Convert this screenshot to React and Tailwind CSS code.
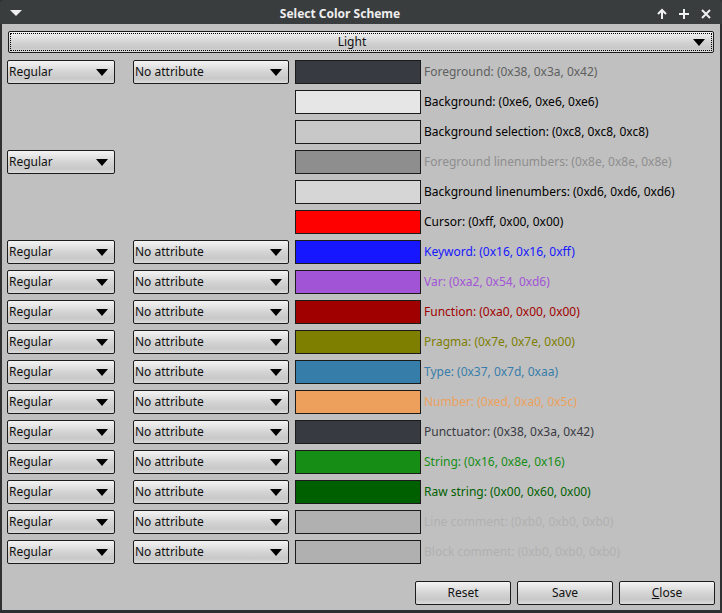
import React from "react";

const rows = [
  { style: true, attr: true, color: "#383a42", label: "Foreground: (0x38, 0x3a, 0x42)", tc: "#5f5f5f" },
  { style: false, attr: false, color: "#e6e6e6", label: "Background: (0xe6, 0xe6, 0xe6)", tc: "#000000" },
  { style: false, attr: false, color: "#c8c8c8", label: "Background selection: (0xc8, 0xc8, 0xc8)", tc: "#000000" },
  { style: true, attr: false, color: "#8e8e8e", label: "Foreground linenumbers: (0x8e, 0x8e, 0x8e)", tc: "#8e8e8e" },
  { style: false, attr: false, color: "#d6d6d6", label: "Background linenumbers: (0xd6, 0xd6, 0xd6)", tc: "#000000" },
  { style: false, attr: false, color: "#ff0000", label: "Cursor: (0xff, 0x00, 0x00)", tc: "#000000" },
  { style: true, attr: true, color: "#1616ff", label: "Keyword: (0x16, 0x16, 0xff)", tc: "#1616ff" },
  { style: true, attr: true, color: "#a254d6", label: "Var: (0xa2, 0x54, 0xd6)", tc: "#a254d6" },
  { style: true, attr: true, color: "#a00000", label: "Function: (0xa0, 0x00, 0x00)", tc: "#a00000" },
  { style: true, attr: true, color: "#7e7e00", label: "Pragma: (0x7e, 0x7e, 0x00)", tc: "#7e7e00" },
  { style: true, attr: true, color: "#377daa", label: "Type: (0x37, 0x7d, 0xaa)", tc: "#377daa" },
  { style: true, attr: true, color: "#eda05c", label: "Number: (0xed, 0xa0, 0x5c)", tc: "#eda05c" },
  { style: true, attr: true, color: "#383a42", label: "Punctuator: (0x38, 0x3a, 0x42)", tc: "#383a42" },
  { style: true, attr: true, color: "#168e16", label: "String: (0x16, 0x8e, 0x16)", tc: "#168e16" },
  { style: true, attr: true, color: "#006000", label: "Raw string: (0x00, 0x60, 0x00)", tc: "#006000" },
  { style: true, attr: true, color: "#b0b0b0", label: "Line comment: (0xb0, 0xb0, 0xb0)", tc: "#b0b0b0" },
  { style: true, attr: true, color: "#b0b0b0", label: "Block comment: (0xb0, 0xb0, 0xb0)", tc: "#b0b0b0" },
];

function Arrow() {
  return (
    <svg width="12" height="7" viewBox="0 0 12 7" className="shrink-0">
      <polygon points="0,0 12,0 6,7" fill="#000" />
    </svg>
  );
}

function Combo({ text, w }) {
  return (
    <div
      className={`${w} h-[24px] shrink-0 flex items-center justify-between pl-[1px] pr-[6px] border border-[#1c1c1c] rounded-[2px] bg-[linear-gradient(#f4f4f4,#d4d4d4_50%,#c8c8c8_80%,#dcdcdc)] text-[12px] text-[#111]`}
    >
      <span className="leading-none">{text}</span>
      <Arrow />
    </div>
  );
}

function Button({ children }) {
  return (
    <div className="w-[96px] h-[24px] flex items-center justify-center border border-[#1c1c1c] rounded-[2px] bg-[linear-gradient(#f4f4f4,#d4d4d4_50%,#c8c8c8_80%,#dcdcdc)] text-[12px] text-[#111]">
      {children}
    </div>
  );
}

export default function App() {
  return (
    <div className="w-[722px] h-[613px] flex flex-col bg-[#2e3031] font-['Noto_Sans',sans-serif] overflow-hidden">
      <div className="h-[24px] shrink-0 flex items-center px-[8px] pt-[3px] bg-[#3a3d3e] rounded-t-[4px]">
        <div className="w-[22px] flex items-center">
          <svg width="12" height="7" viewBox="0 0 12 7" className="ml-[2px]">
            <polygon points="0,0 12,0 6,6" fill="#f0f0f0" />
          </svg>
        </div>
        <div className="flex-1 text-center text-[12px] font-bold text-[#eeeeee]">Select Color Scheme</div>
        <div className="w-[62px] flex items-center justify-end gap-[10px] mr-[2px]">
          <svg width="12" height="12" viewBox="0 0 12 12">
            <path d="M6 11V2M2 6l4-4 4 4" stroke="#f0f0f0" strokeWidth="2" fill="none" />
          </svg>
          <svg width="12" height="12" viewBox="0 0 12 12">
            <path d="M6 1v10M1 6h10" stroke="#f0f0f0" strokeWidth="2" fill="none" />
          </svg>
          <svg width="12" height="12" viewBox="0 0 12 12">
            <path d="M2 2l8 8M10 2l-8 8" stroke="#f0f0f0" strokeWidth="2" fill="none" />
          </svg>
        </div>
      </div>
      <div className="flex-1 mx-[2px] mb-[3px] bg-[#c0c0c0] flex flex-col">
        <div className="mt-[7px] ml-[6px] mr-[6px] h-[22px] border border-[#1c1c1c] rounded-[2px] bg-[linear-gradient(#f4f4f4,#d4d4d4_50%,#c8c8c8_80%,#dcdcdc)] p-[1px]">
          <div className="h-full border border-dotted border-[#000] flex items-center pr-[6px]">
            <div className="flex-1 text-center text-[12px] text-[#111] leading-none">Light</div>
            <Arrow />
          </div>
        </div>
        <div className="mt-[7px] flex flex-col gap-[6px] pl-[5px]">
          {rows.map((r, i) => (
            <div key={i} className="h-[24px] flex items-center">
              {r.style ? <Combo text="Regular" w="w-[108px]" /> : <div className="w-[108px] shrink-0" />}
              <div className="w-[18px] shrink-0" />
              {r.attr ? <Combo text="No attribute" w="w-[156px]" /> : <div className="w-[156px] shrink-0" />}
              <div className="w-[6px] shrink-0" />
              <div className="w-[126px] h-[24px] shrink-0 border border-[#1a1a1a]" style={{ backgroundColor: r.color }} />
              <div className="ml-[3px] text-[12px] whitespace-nowrap" style={{ color: r.tc }}>
                {r.label}
              </div>
            </div>
          ))}
        </div>
        <div className="mt-auto mb-[5px] flex justify-end gap-[6px] pr-[5px]">
          <Button>Reset</Button>
          <Button>Save</Button>
          <Button>
            <span>
              <span className="underline">C</span>lose
            </span>
          </Button>
        </div>
      </div>
    </div>
  );
}
